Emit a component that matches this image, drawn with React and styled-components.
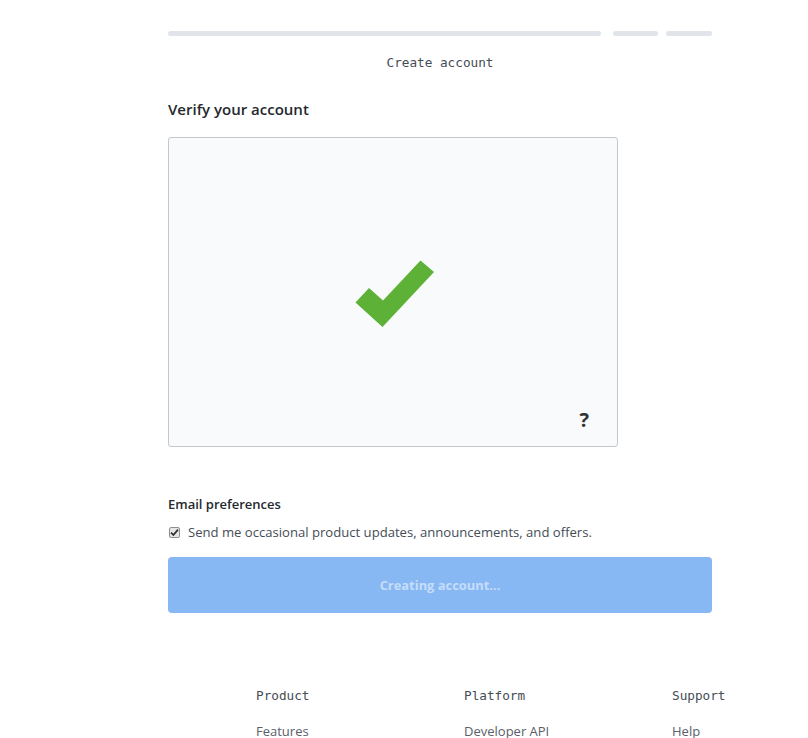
import React from "react";
import styled, { createGlobalStyle } from "styled-components";

const GlobalStyle = createGlobalStyle`
  html, body {
    margin: 0;
    padding: 0;
    background: #ffffff;
  }
  body {
    font-family: "Open Sans", "Noto Sans", Arial, sans-serif;
    color: #24292e;
    overflow: hidden;
  }
`;

const Page = styled.div`
  width: 808px;
  height: 738px;
  overflow: hidden;
`;

const Main = styled.main`
  width: 544px;
  margin-left: 168px;
  padding-top: 31px;
`;

const Steps = styled.div`
  display: flex;
  align-items: center;
`;

const StepBar = styled.div`
  height: 5px;
  border-radius: 3px;
  background: #e1e4e8;
  flex: ${(p) => (p.$grow ? "1 1 auto" : "0 0 auto")};
  width: ${(p) => (p.$width ? `${p.$width}px` : "auto")};
  margin-left: ${(p) => p.$gap || 0}px;
`;

const StepLabel = styled.div`
  font-family: "DejaVu Sans Mono", "Liberation Mono", monospace;
  font-size: 12.7px;
  color: #444d56;
  text-align: center;
  margin-top: 19px;
  line-height: 16px;
`;

const SectionTitle = styled.h2`
  margin: 28px 0 0;
  font-size: 15px;
  font-weight: 600;
  line-height: 20px;
  color: #24292e;
`;

const Captcha = styled.div`
  margin-top: 18px;
  width: 450px;
  height: 310px;
  box-sizing: border-box;
  border: 1px solid #c4c6c9;
  border-radius: 3px;
  background: #f9fafb;
  display: flex;
  flex-direction: column;
`;

const CaptchaCenter = styled.div`
  flex: 1;
  display: flex;
  align-items: center;
  justify-content: center;
  padding: 41px 0 0 4px;
`;

const CaptchaFooter = styled.div`
  display: flex;
  justify-content: flex-end;
  padding: 0 28px 14px 0;
`;

const HelpMark = styled.span`
  font-family: "Open Sans", Arial, sans-serif;
  font-size: 20px;
  font-weight: 700;
  color: #333;
  line-height: 24px;
`;

const PrefsTitle = styled.h3`
  margin: 48px 0 0;
  font-size: 13px;
  font-weight: 600;
  line-height: 18px;
  color: #24292e;
`;

const CheckRow = styled.label`
  display: flex;
  align-items: center;
  margin-top: 9px;
  font-size: 13.1px;
  color: #444d56;
  line-height: 20px;
`;

const CheckBox = styled.span`
  width: 11px;
  height: 11px;
  box-sizing: border-box;
  border: 1px solid #8f8f8f;
  border-radius: 2px;
  background: #e6e6e6;
  margin: 0 8px 0 1px;
  display: inline-flex;
  align-items: center;
  justify-content: center;
`;

const SubmitButton = styled.button`
  display: block;
  width: 544px;
  height: 56px;
  margin-top: 15px;
  border: 0;
  border-radius: 4px;
  background: #87b8f3;
  color: #c6ddfa;
  font-family: "Open Sans", Arial, sans-serif;
  font-size: 12.9px;
  font-weight: 700;
  cursor: default;
`;

const Footer = styled.footer`
  display: flex;
  margin-top: 75px;
  padding-left: 256px;
`;

const FooterColumn = styled.div`
  width: 208px;
  flex: 0 0 208px;
`;

const FooterHeading = styled.div`
  font-family: "DejaVu Sans Mono", "Liberation Mono", monospace;
  font-size: 12.7px;
  color: #444d56;
  line-height: 16px;
`;

const FooterLink = styled.a`
  display: block;
  margin-top: 17px;
  font-size: 13px;
  color: #586069;
  line-height: 20px;
  text-decoration: none;
`;

const columns = [
  { title: "Product", link: "Features" },
  { title: "Platform", link: "Developer API" },
  { title: "Support", link: "Help" },
];

function CheckMark() {
  return (
    <svg width="80" height="68" viewBox="0 0 80 68" aria-hidden="true">
      <polygon
        points="0.5,42.5 14,28 28,40.5 65.5,0.5 79,12 27.5,67"
        fill="#5cb136"
      />
    </svg>
  );
}

function TickSmall() {
  return (
    <svg width="9" height="9" viewBox="0 0 9 9" aria-hidden="true">
      <path d="M1 4.6 L3.4 7 L8 1.6" stroke="#333" strokeWidth="1.8" fill="none" />
    </svg>
  );
}

export default function App() {
  return (
    <Page>
      <GlobalStyle />
      <Main>
        <Steps>
          <StepBar $grow />
          <StepBar $width={45} $gap={12} />
          <StepBar $width={46} $gap={8} />
        </Steps>
        <StepLabel>Create account</StepLabel>

        <SectionTitle>Verify your account</SectionTitle>
        <Captcha>
          <CaptchaCenter>
            <CheckMark />
          </CaptchaCenter>
          <CaptchaFooter>
            <HelpMark>?</HelpMark>
          </CaptchaFooter>
        </Captcha>

        <PrefsTitle>Email preferences</PrefsTitle>
        <CheckRow>
          <CheckBox>
            <TickSmall />
          </CheckBox>
          Send me occasional product updates, announcements, and offers.
        </CheckRow>

        <SubmitButton type="button">Creating account...</SubmitButton>
      </Main>
      <Footer>
        {columns.map((c) => (
          <FooterColumn key={c.title}>
            <FooterHeading>{c.title}</FooterHeading>
            <FooterLink href="#">{c.link}</FooterLink>
          </FooterColumn>
        ))}
      </Footer>
    </Page>
  );
}
